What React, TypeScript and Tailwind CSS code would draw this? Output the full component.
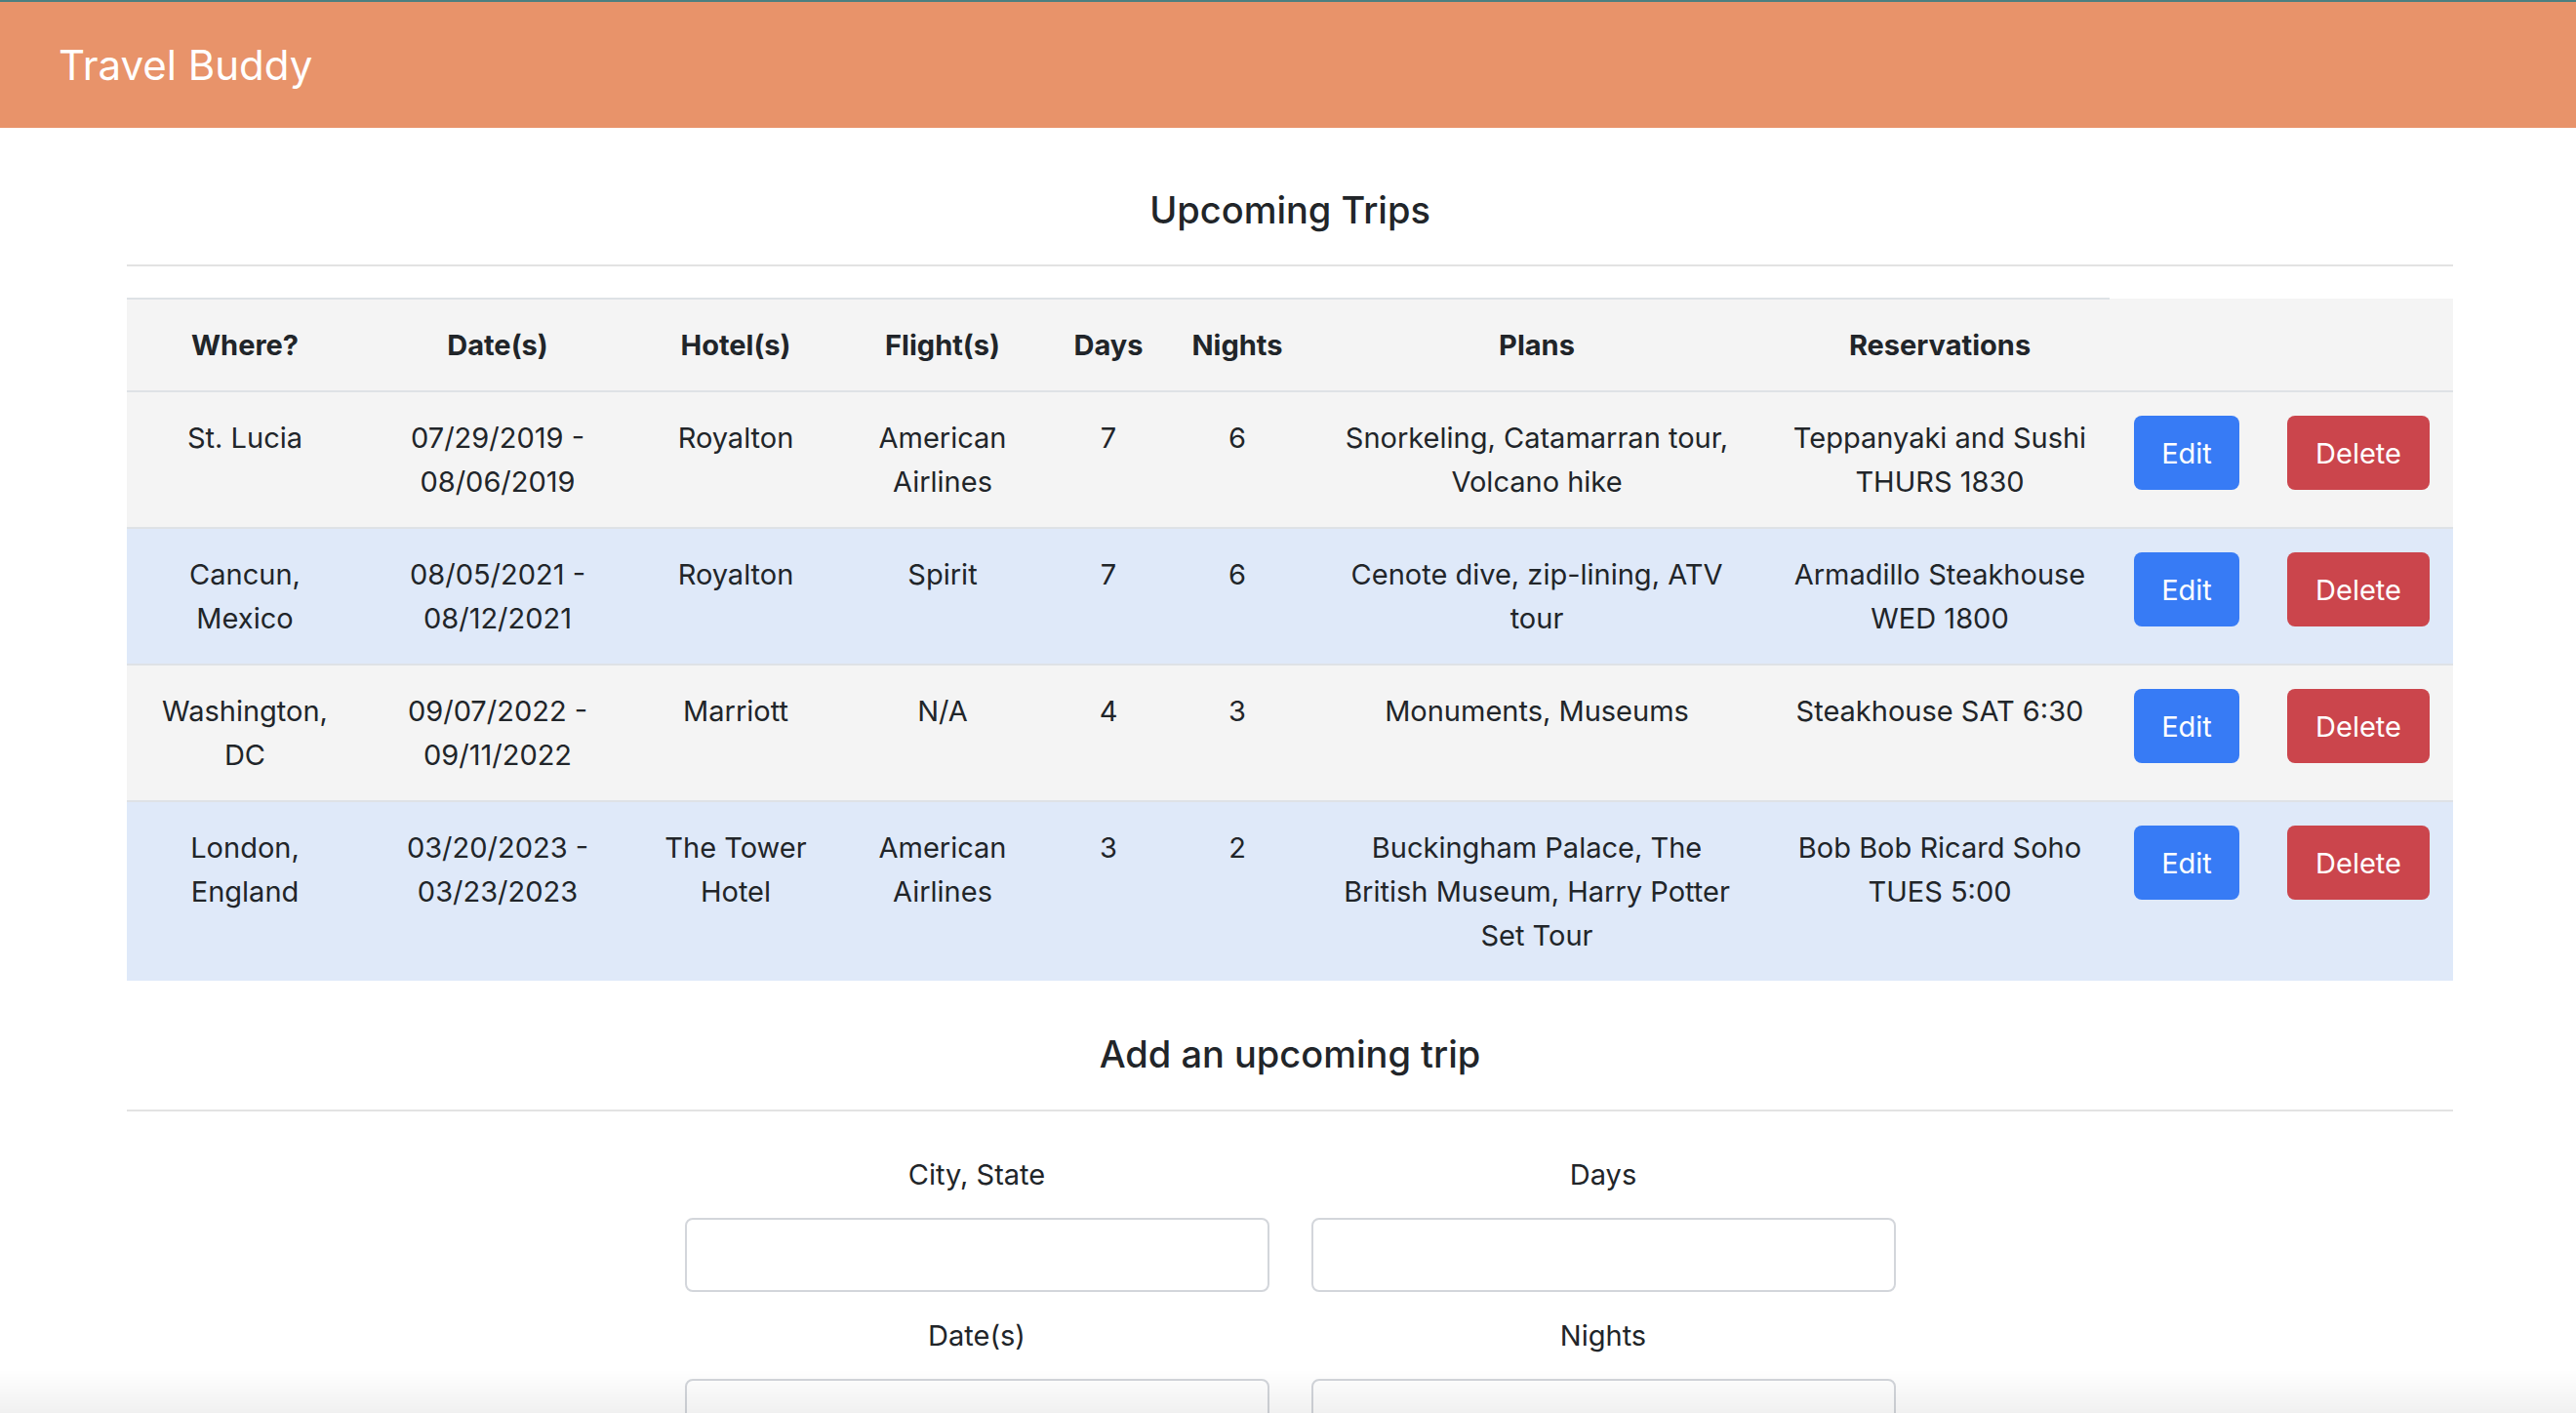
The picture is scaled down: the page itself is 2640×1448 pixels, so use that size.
import React from "react"

type Trip = {
    where: string[]
    dates: string[]
    hotel: string[]
    flight: string[]
    days: string
    nights: string
    plans: string[]
    reservations: string[]
}

const trips: Trip[] = [
    {
        where: ["St. Lucia"],
        dates: ["07/29/2019 -", "08/06/2019"],
        hotel: ["Royalton"],
        flight: ["American", "Airlines"],
        days: "7",
        nights: "6",
        plans: ["Snorkeling, Catamarran tour,", "Volcano hike"],
        reservations: ["Teppanyaki and Sushi", "THURS 1830"],
    },
    {
        where: ["Cancun,", "Mexico"],
        dates: ["08/05/2021 -", "08/12/2021"],
        hotel: ["Royalton"],
        flight: ["Spirit"],
        days: "7",
        nights: "6",
        plans: ["Cenote dive, zip-lining, ATV", "tour"],
        reservations: ["Armadillo Steakhouse", "WED 1800"],
    },
    {
        where: ["Washington,", "DC"],
        dates: ["09/07/2022 -", "09/11/2022"],
        hotel: ["Marriott"],
        flight: ["N/A"],
        days: "4",
        nights: "3",
        plans: ["Monuments, Museums"],
        reservations: ["Steakhouse SAT 6:30"],
    },
    {
        where: ["London,", "England"],
        dates: ["03/20/2023 -", "03/23/2023"],
        hotel: ["The Tower", "Hotel"],
        flight: ["American", "Airlines"],
        days: "3",
        nights: "2",
        plans: ["Buckingham Palace, The", "British Museum, Harry Potter", "Set Tour"],
        reservations: ["Bob Bob Ricard Soho", "TUES 5:00"],
    },
]

const headings = ["Where?", "Date(s)", "Hotel(s)", "Flight(s)", "Days", "Nights", "Plans", "Reservations"]

function Lines({ lines }: { lines: string[] }) {
    return (
        <>
            {lines.map((line, i) => (
                <span key={i} className="block whitespace-nowrap">{line}</span>
            ))}
        </>
    )
}

function Field({ label }: { label: string }) {
    return (
        <div className="flex flex-col items-center">
            <label className="leading-[45px] mb-[22px]">{label}</label>
            <input type="text" className="w-full h-[76px] rounded-[8px] border-2 border-[#d3d6db] bg-white px-4 outline-none" />
        </div>
    )
}

export default function App() {
    const cell = "px-0 py-[24px] text-center align-top leading-[45px]"
    return (
        <div className="min-h-screen bg-white text-[#212529] text-[29px]" style={{ fontFamily: "Inter, 'Noto Sans', sans-serif" }}>
            <div className="h-[2px] bg-[#4b7f80]" />
            <nav className="h-[129px] bg-[#e8936a] flex items-center pl-[60px]">
                <span className="text-white text-[42px] leading-none">Travel Buddy</span>
            </nav>

            <main className="w-[2384px] ml-[130px]">
                <h2 className="mt-[60px] text-center text-[38px] leading-[48px] font-medium">Upcoming Trips</h2>
                <hr className="mt-[32px] border-0 h-[2px] bg-[#e3e3e3]" />

                <table className="mt-[32px] w-full table-fixed border-collapse">
                    <colgroup>
                        <col className="w-[242px]" />
                        <col className="w-[276px]" />
                        <col className="w-[212px]" />
                        <col className="w-[212px]" />
                        <col className="w-[128px]" />
                        <col className="w-[136px]" />
                        <col className="w-[478px]" />
                        <col className="w-[348px]" />
                        <col className="w-[158px]" />
                        <col className="w-[194px]" />
                    </colgroup>
                    <thead>
                        <tr className="bg-[#f4f4f4] border-b-2 border-[#dee2e6]">
                            {headings.map((h) => (
                                <th key={h} className={`${cell} font-bold border-t-2 border-[#dee2e6]`}>{h}</th>
                            ))}
                            <th className={cell} />
                            <th className={cell} />
                        </tr>
                    </thead>
                    <tbody>
                        {trips.map((t, index) => (
                            <tr key={index} className={`${index % 2 === 0 ? "bg-[#f4f4f4]" : "bg-[#dfe9f9]"} ${index < trips.length - 1 ? "border-b-2 border-[#dee2e6]" : ""}`}>
                                <td className={cell}><Lines lines={t.where} /></td>
                                <td className={cell}><Lines lines={t.dates} /></td>
                                <td className={cell}><Lines lines={t.hotel} /></td>
                                <td className={cell}><Lines lines={t.flight} /></td>
                                <td className={cell}>{t.days}</td>
                                <td className={cell}>{t.nights}</td>
                                <td className={cell}><Lines lines={t.plans} /></td>
                                <td className={cell}><Lines lines={t.reservations} /></td>
                                <td className={cell}>
                                    <button className="h-[76px] w-[108px] rounded-[8px] bg-[#377bf5] text-white leading-none">Edit</button>
                                </td>
                                <td className={cell}>
                                    <button className="h-[76px] w-[146px] rounded-[8px] bg-[#cb454c] text-white leading-none">Delete</button>
                                </td>
                            </tr>
                        ))}
                    </tbody>
                </table>

                <h2 className="mt-[51px] text-center text-[38px] leading-[48px] font-medium">Add an upcoming trip</h2>
                <hr className="mt-[33px] border-0 h-[2px] bg-[#e3e3e3]" />

                <form className="mx-auto mt-[42px] w-[1241px] grid grid-cols-2 gap-x-[43px] gap-y-[22px]">
                    <Field label="City, State" />
                    <Field label="Days" />
                    <Field label="Date(s)" />
                    <Field label="Nights" />
                </form>
            </main>

            <div className="fixed inset-x-0 bottom-0 h-[44px] pointer-events-none bg-linear-to-b from-transparent to-[#0000000f]" />
        </div>
    )
}
